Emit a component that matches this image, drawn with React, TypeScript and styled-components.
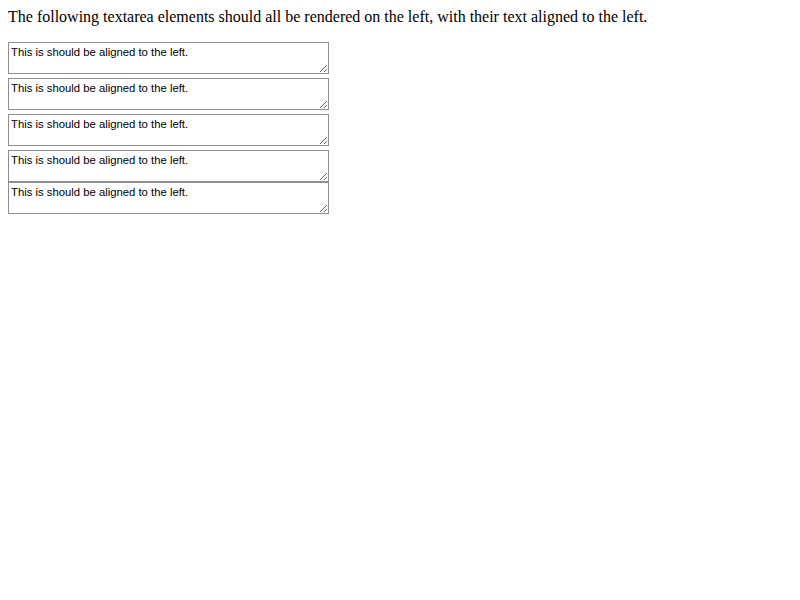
import React from "react";
import styled, { createGlobalStyle } from "styled-components";

const Global = createGlobalStyle`
  html, body { background: #fff; }
  body {
    margin: 8px;
    font-family: "Liberation Serif", "Times New Roman", serif;
    font-size: 16px;
    color: #000;
  }
`;

const Intro = styled.p`
  margin: 0 0 16px;
  font-size: 16px;
  line-height: 18px;
`;

const Stack = styled.div`
  display: flex;
  flex-direction: column;
  align-items: flex-start;
`;

const Area = styled.textarea<{ $gap: number }>`
  box-sizing: border-box;
  width: 321px;
  height: 32px;
  margin: 0 0 ${(p) => p.$gap}px;
  padding: 2px;
  border: 1px solid #8f8f8f;
  border-radius: 0;
  background: #fff;
  color: #000;
  font-family: "Liberation Sans", Arial, sans-serif;
  font-size: 11.3px;
  line-height: 15px;
  text-align: left;
  resize: both;
  outline: none;
`;

const TEXT = "This is should be aligned to the left.";
const gaps = [4, 4, 4, 0, 0];

export default function App() {
  return (
    <>
      <Global />
      <Intro>
        The following textarea elements should all be rendered on the left, with their text aligned to the left.
      </Intro>
      <Stack>
        {gaps.map((g, i) => (
          <Area key={i} $gap={g} defaultValue={TEXT} />
        ))}
      </Stack>
    </>
  );
}
